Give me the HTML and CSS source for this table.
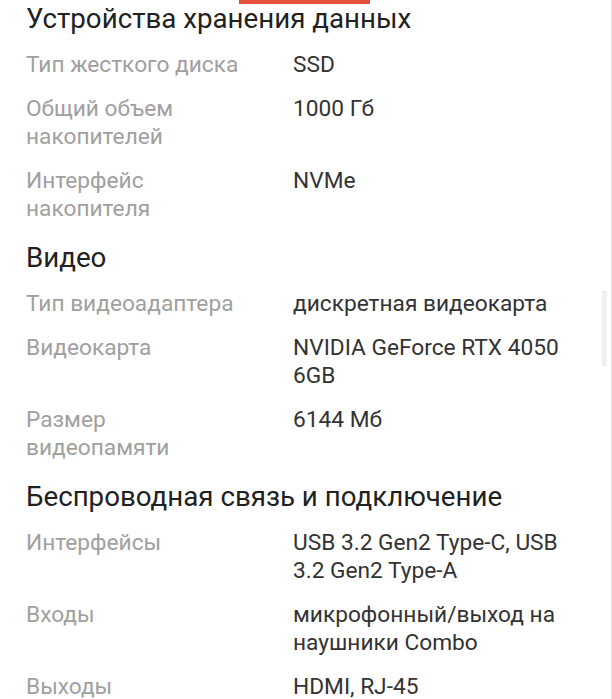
FILE: index.html
```html
<!DOCTYPE html>
<html lang="ru">
<head>
<meta charset="utf-8">
<link rel="stylesheet" href="styles.css">
</head>
<body>
<div class="page">
  <div class="tab-indicator"></div>
  <div class="specs">
    <section class="group">
      <h2 class="group-title">Устройства хранения данных</h2>
      <div class="row"><div class="label">Тип жесткого диска</div><div class="value">SSD</div></div>
      <div class="row"><div class="label">Общий объем накопителей</div><div class="value">1000 Гб</div></div>
      <div class="row"><div class="label">Интерфейс накопителя</div><div class="value">NVMe</div></div>
    </section>
    <section class="group">
      <h2 class="group-title">Видео</h2>
      <div class="row"><div class="label">Тип видеоадаптера</div><div class="value">дискретная видеокарта</div></div>
      <div class="row"><div class="label">Видеокарта</div><div class="value">NVIDIA GeForce RTX 4050 6GB</div></div>
      <div class="row"><div class="label">Размер видеопамяти</div><div class="value">6144 Мб</div></div>
    </section>
    <section class="group">
      <h2 class="group-title">Беспроводная связь и подключение</h2>
      <div class="row"><div class="label">Интерфейсы</div><div class="value">USB 3.2 Gen2 Type-C, USB 3.2 Gen2 Type-A</div></div>
      <div class="row"><div class="label">Входы</div><div class="value">микрофонный/выход на наушники Combo</div></div>
      <div class="row"><div class="label">Выходы</div><div class="value">HDMI, RJ-45</div></div>
    </section>
  </div>
  <div class="scroll-thumb"></div>
</div>
</body>
</html>
```
FILE: styles.css
```css
html, body {
  margin: 0;
  padding: 0;
  background: #ffffff;
}
.page {
  position: relative;
  width: 611px;
  height: 699px;
  overflow: hidden;
  border-right: 1px solid #e4e4e4;
  font-family: Roboto, "Noto Sans", sans-serif;
}
.tab-indicator {
  position: absolute;
  left: 239px;
  top: 0;
  width: 131px;
  height: 4px;
  background: #e5533d;
}
.specs {
  display: flex;
  flex-direction: column;
  gap: 19px;
  padding: 3px 0 0 26px;
}
.group {
  display: flex;
  flex-direction: column;
  gap: 16px;
}
.group-title {
  margin: 0;
  font-size: 27.7px;
  line-height: 32px;
  font-weight: 400;
  color: #212121;
}
.row {
  display: grid;
  grid-template-columns: 267px 280px;
  font-size: 22.7px;
  line-height: 28px;
}
.label {
  color: #a0a0a0;
  padding-right: 50px;
}
.value {
  color: #333333;
}
.scroll-thumb {
  position: absolute;
  left: 602px;
  top: 291px;
  width: 5px;
  height: 75px;
  background: #f0f0f0;
}
```
